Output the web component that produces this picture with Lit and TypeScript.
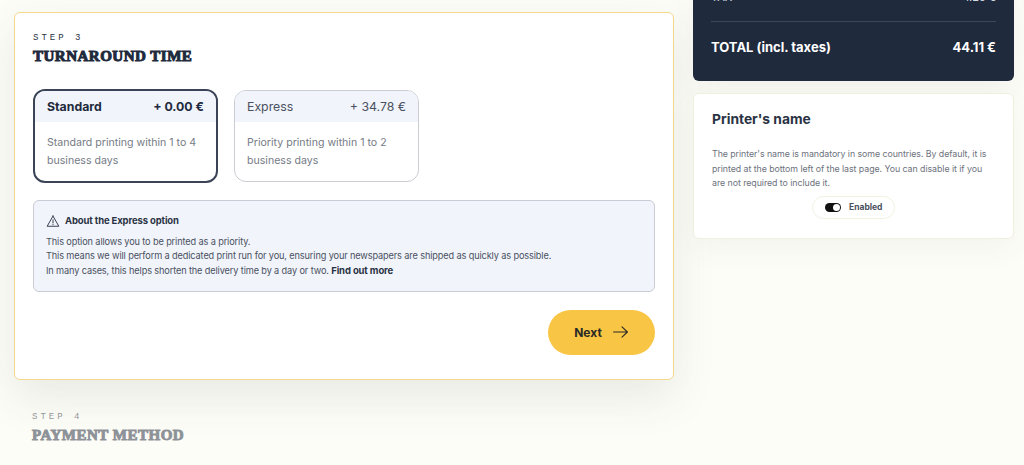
import { LitElement, html, css } from "lit";
import { customElement, property } from "lit/decorators.js";

// one selectable delivery option
@customElement("option-card")
export class OptionCard extends LitElement {
  @property() name = "";
  @property() price = "";
  @property() text = "";
  @property({ type: Boolean }) selected = false;

  static styles = css`
    :host {
      display: block;
      width: 185px;
    }
    .card {
      box-sizing: border-box;
      height: 92px;
      margin-top: 1px;
      border: 1px solid #c9ccd3;
      border-radius: 12px;
      overflow: hidden;
      background: #fff;
      color: #4a5160;
    }
    .head {
      display: flex;
      justify-content: space-between;
      align-items: center;
      height: 31px;
      padding: 0 12px;
      background: #f1f4fb;
      font-size: 12.3px;
    }
    .body {
      padding: 12px 12px 0;
      font-size: 10.6px;
      line-height: 18px;
      color: #767b86;
    }
    .selected {
      height: 94px;
      margin-top: 0;
      border: 2px solid #3a4456;
      color: #1f2a3d;
    }
    .selected .head {
      font-weight: 700;
    }
  `;

  render() {
    return html`
      <div class="card ${this.selected ? "selected" : ""}">
        <div class="head"><span>${this.name}</span><span>${this.price}</span></div>
        <div class="body">${this.text}</div>
      </div>
    `;
  }
}

@customElement("app-root")
export class AppRoot extends LitElement {
  static styles = css`
    :host {
      display: block;
      height: 465px;
      overflow: hidden;
      background: #fdfdf7;
      font-family: "Inter", "Liberation Sans", sans-serif;
      color: #1f2a3d;
    }
    .page {
      display: grid;
      grid-template-columns: 660px 321px;
      column-gap: 19px;
      padding: 12px 10px 0 14px;
      align-items: start;
    }
    .main {
      box-sizing: border-box;
      height: 368px;
      padding: 19px 18px;
      background: #fff;
      border: 1px solid #f2d98c;
      border-radius: 6px;
      box-shadow: 0 18px 44px rgba(60, 70, 60, 0.1);
    }
    .step {
      font-family: "Liberation Mono", monospace;
      font-size: 9px;
      line-height: 12px;
      letter-spacing: 3px;
      color: #2a3344;
    }
    .title {
      margin: 4px 0 0;
      font-family: "Liberation Serif", serif;
      font-weight: 700;
      font-size: 15px;
      line-height: 17px;
      letter-spacing: 0.5px;
      color: #1f2a3d;
      -webkit-text-stroke: 1px currentColor;
    }
    .options {
      display: flex;
      gap: 16px;
      margin-top: 24px;
    }
    .note {
      margin-top: 17px;
      height: 92px;
      box-sizing: border-box;
      padding: 13px 12px;
      background: #f1f4fb;
      border: 1px solid #c9ccd6;
      border-radius: 6px;
      font-size: 9.2px;
      letter-spacing: -0.13px;
      line-height: 14.5px;
      color: #4a5160;
    }
    .note-head {
      display: flex;
      align-items: center;
      gap: 5px;
      margin-bottom: 6px;
      font-size: 9.5px;
      font-weight: 700;
      color: #2a3344;
    }
    .note-head svg {
      width: 14px;
      height: 14px;
    }
    .note b {
      font-size: 9.5px;
      color: #2a3344;
    }
    .actions {
      display: flex;
      justify-content: flex-end;
      margin-top: 18px;
    }
    .next {
      display: flex;
      align-items: center;
      justify-content: center;
      gap: 11px;
      width: 107px;
      height: 45px;
      padding: 0 1px 1px 0;
      border: none;
      border-radius: 23px;
      background: #f9c544;
      color: #2a2a26;
      font: 700 12px "Inter", "Liberation Sans", sans-serif;
    }
    .next svg {
      width: 15px;
      height: 12px;
    }
    .later {
      padding: 31px 0 0 18px;
      opacity: 0.5;
    }
    .later .title {
      margin-top: 4px;
    }
    .side {
      display: flex;
      flex-direction: column;
      gap: 12px;
      margin-top: -32px;
    }
    .summary {
      box-sizing: border-box;
      height: 101px;
      padding: 10px 18px 0;
      background: #1f2a3d;
      border-radius: 6px;
      color: #fff;
      box-shadow: 0 10px 30px rgba(60, 70, 60, 0.06);
    }
    .row {
      display: flex;
      justify-content: space-between;
    }
    .tax {
      font-size: 11px;
      line-height: 14px;
      color: #d8dbe2;
      padding-bottom: 17px;
      border-bottom: 1px solid #3c465a;
    }
    .total {
      margin-top: 17px;
      font-size: 13px;
      line-height: 16px;
      font-weight: 700;
    }
    .printer {
      box-sizing: border-box;
      height: 146px;
      padding: 16px 18px;
      background: #fff;
      border: 1px solid #f1efdf;
      border-radius: 6px;
      box-shadow: 0 10px 30px rgba(60, 70, 60, 0.05);
    }
    .printer h3 {
      margin: 0;
      font-size: 13.8px;
      line-height: 18px;
      font-weight: 700;
      color: #2a3344;
    }
    .printer p {
      margin: 19px 0 0;
      font-size: 8.8px;
      letter-spacing: -0.05px;
      line-height: 14.5px;
      color: #6d727d;
    }
    .switch-wrap {
      display: flex;
      justify-content: center;
      margin-top: 5px;
    }
    .switch {
      display: flex;
      align-items: center;
      gap: 8px;
      box-sizing: border-box;
      height: 23px;
      width: 83px;
      padding: 0 12px;
      border: 1px solid #f3f1e2;
      border-radius: 12px;
      font-size: 8.5px;
      font-weight: 700;
      color: #4a5160;
    }
    .toggle {
      position: relative;
      flex: none;
      width: 16px;
      height: 9px;
      background: #111;
      border-radius: 5px;
    }
    .toggle::after {
      content: "";
      position: absolute;
      right: 1px;
      top: 1px;
      width: 7px;
      height: 7px;
      border-radius: 50%;
      background: #fff;
    }
  `;

  render() {
    return html`
      <div class="page">
        <div>
          <section class="main">
            <div class="step">STEP 3</div>
            <h2 class="title">TURNAROUND TIME</h2>
            <div class="options">
              <option-card
                selected
                name="Standard"
                price="+ 0.00 €"
                text="Standard printing within 1 to 4 business days"
              ></option-card>
              <option-card
                name="Express"
                price="+ 34.78 €"
                text="Priority printing within 1 to 2 business days"
              ></option-card>
            </div>
            <div class="note">
              <div class="note-head">
                <svg viewBox="0 0 24 24" fill="none" stroke="#2a3344" stroke-width="1.6" stroke-linejoin="round" stroke-linecap="round">
                  <path d="M12 3.5 2 21h20L12 3.5Z" />
                  <path d="M12 10v5.5M12 18v.3" />
                </svg>
                About the Express option
              </div>
              This option allows you to be printed as a priority.<br />
              This means we will perform a dedicated print run for you, ensuring your newspapers are shipped as quickly as possible.<br />
              In many cases, this helps shorten the delivery time by a day or two. <b>Find out more</b>
            </div>
            <div class="actions">
              <button class="next">
                Next
                <svg viewBox="0 0 15 12" fill="none" stroke="#2a2a26" stroke-width="1.1" stroke-linecap="round" stroke-linejoin="round">
                  <path d="M.6 6h13.8M9 .8 14.4 6 9 11.2" />
                </svg>
              </button>
            </div>
          </section>
          <div class="later">
            <div class="step">STEP 4</div>
            <h2 class="title">PAYMENT METHOD</h2>
          </div>
        </div>
        <aside class="side">
          <div class="summary">
            <div class="row tax"><span>TAX</span><span>1.25 €</span></div>
            <div class="row total"><span>TOTAL (incl. taxes)</span><span>44.11 €</span></div>
          </div>
          <div class="printer">
            <h3>Printer's name</h3>
            <p>The printer's name is mandatory in some countries. By default, it is printed at the bottom left of the last page. You can disable it if you are not required to include it.</p>
            <div class="switch-wrap">
              <div class="switch"><span class="toggle"></span>Enabled</div>
            </div>
          </div>
        </aside>
      </div>
    `;
  }
}
